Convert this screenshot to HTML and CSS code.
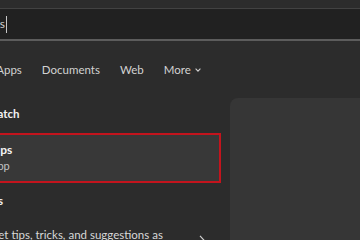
FILE: index.html
```html
<!DOCTYPE html>
<html lang="en">
<head>
    <meta charset="UTF-8">
    <title>Search</title>
    <link rel="stylesheet" href="styles.css">
</head>
<body>
    <div class="page">
        <div class="search">
            <span class="query">Tips</span><span class="caret"></span>
        </div>

        <nav class="tabs">
            <span>All</span>
            <span>Apps</span>
            <span>Documents</span>
            <span>Web</span>
            <span class="more">More
                <svg width="6" height="4" viewBox="0 0 6 4"><path d="M0.6 0.7 L3 3.1 L5.4 0.7" fill="none" stroke="#cfcfcf" stroke-width="1.1"/></svg>
            </span>
        </nav>

        <div class="results">
            <div class="list">
                <h2 class="heading best">Best match</h2>
                <div class="card">
                    <div class="card-text">
                        <div class="title">Tips</div>
                        <div class="sub">App</div>
                    </div>
                </div>
                <h2 class="heading settings">Settings</h2>
                <div class="row">
                    <span class="row-text">Get tips, tricks, and suggestions as you use Windows</span>
                    <svg class="row-arrow" width="6" height="10" viewBox="0 0 6 10"><path d="M1 0.8 L4.8 5 L1 9.2" fill="none" stroke="#cfcfcf" stroke-width="1.2"/></svg>
                </div>
            </div>
            <div class="preview"></div>
        </div>
    </div>
</body>
</html>
```

FILE: styles.css
```css
html, body { margin: 0; padding: 0; }
body { background: #2c2c2c; font-family: Lato, "Open Sans", sans-serif; color: #d4d4d4; overflow: hidden; width: 360px; height: 240px; }
.page { margin-left: -60px; width: 420px; padding-top: 8px; }

.search { height: 30px; background: #212121; border-top: 1px solid #424242; border-bottom: 2px solid #5c5c5c; display: flex; align-items: center; padding-left: 43px; }
.query { font-size: 12px; line-height: 16px; color: #d0d0d0; }
.caret { width: 1px; height: 17px; background: #c8c8c8; margin-left: 1px; }

.tabs { display: flex; align-items: center; gap: 20px; padding: 21px 0 0 23px; height: 16px; font-size: 11.5px; line-height: 16px; color: #d2d2d2; }
.more { display: flex; align-items: center; gap: 4px; }

.results { display: flex; margin-top: 20px; }
.list { width: 281px; flex: none; }
.heading { margin: 0; padding-left: 22px; font-size: 11.5px; font-weight: 700; color: #f2f2f2; line-height: 16px; }
.best { margin-top: 8px; }

.card { margin: 11px 0 0 12px; height: 39px; border: 2px solid #c3141d; background: #383838; padding: 7px 0 0 36px; }
.title { font-size: 12px; font-weight: 700; color: #f4f4f4; line-height: 15px; }
.sub { font-size: 11px; color: #c4c4c4; line-height: 14px; margin-top: 2px; }

.settings { margin-top: 10px; }
.row { display: flex; align-items: center; margin: 18px 0 0 12px; padding: 0 16px 0 38px; font-size: 11.5px; line-height: 16px; color: #d8d8d8; }
.row-text { width: 180px; }
.row-arrow { margin-left: auto; margin-bottom: 6px; }

.preview { flex: 1; margin-left: 9px; height: 200px; background: #363636; border-radius: 8px 0 0 0; }
```
